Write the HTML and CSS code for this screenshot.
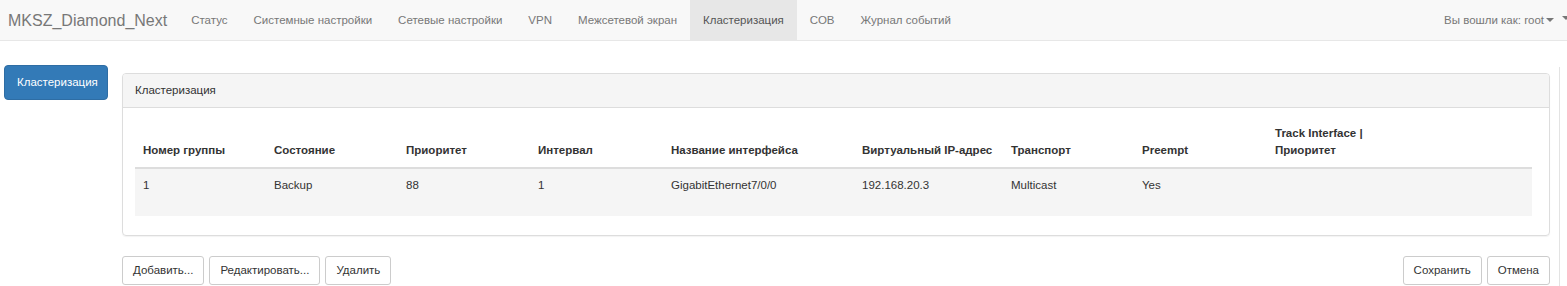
FILE: index.html
```html
<!DOCTYPE html>
<html lang="ru">
<head>
    <meta charset="UTF-8">
    <title>Кластеризация</title>
    <link rel="stylesheet" href="styles.css">
</head>
<body>
    <!-- Верхнее меню -->
    <nav class="navbar">
        <a class="brand" href="#">MKSZ_Diamond_Next</a>
        <ul class="nav">
            <li><a href="#">Статус</a></li>
            <li><a href="#">Системные настройки</a></li>
            <li><a href="#">Сетевые настройки</a></li>
            <li><a href="#">VPN</a></li>
            <li><a href="#">Межсетевой экран</a></li>
            <li class="active"><a href="#">Кластеризация</a></li>
            <li><a href="#">СОВ</a></li>
            <li><a href="#">Журнал событий</a></li>
        </ul>
        <div class="nav-right">
            <span>Вы вошли как: root</span><span class="caret"></span>
            <span class="caret extra"></span>
        </div>
    </nav>

    <div class="main">
        <!-- Боковое меню -->
        <div class="sidebar">
            <a class="btn btn-primary" href="#">Кластеризация</a>
        </div>

        <!-- Содержимое -->
        <div class="content">
            <div class="panel">
                <div class="panel-heading">Кластеризация</div>
                <div class="panel-body">
                    <table class="table">
                        <thead>
                            <tr>
                                <th class="c1">Номер группы</th>
                                <th class="c2">Состояние</th>
                                <th class="c3">Приоритет</th>
                                <th class="c4">Интервал</th>
                                <th class="c5">Название интерфейса</th>
                                <th class="c6">Виртуальный IP-адрес</th>
                                <th class="c7">Транспорт</th>
                                <th class="c8">Preempt</th>
                                <th class="c9">Track Interface |<br>Приоритет</th>
                            </tr>
                        </thead>
                        <tbody>
                            <tr>
                                <td>1</td>
                                <td>Backup</td>
                                <td>88</td>
                                <td>1</td>
                                <td>GigabitEthernet7/0/0</td>
                                <td>192.168.20.3</td>
                                <td>Multicast</td>
                                <td>Yes</td>
                                <td></td>
                            </tr>
                        </tbody>
                    </table>
                </div>
            </div>

            <div class="actions">
                <div class="btn-group">
                    <button class="btn">Добавить...</button>
                    <button class="btn">Редактировать...</button>
                    <button class="btn">Удалить</button>
                </div>
                <div class="btn-group">
                    <button class="btn">Сохранить</button>
                    <button class="btn">Отмена</button>
                </div>
            </div>
        </div>

        <div class="rail"></div>
    </div>
</body>
</html>
```

FILE: styles.css
```css
/* Основа */
body {
    margin: 0;
    font-family: "Liberation Sans", Arial, sans-serif;
    font-size: 11.5px;
    line-height: 17px;
    color: #333;
    background: #fff;
}
a {
    text-decoration: none;
}

/* Верхнее меню */
.navbar {
    display: flex;
    align-items: stretch;
    height: 40px;
    background-color: #f8f8f8;
    border-bottom: 1px solid #e7e7e7;
}
.brand {
    display: flex;
    align-items: center;
    padding: 0 10px 0 8px;
    font-size: 16px;
    color: #777;
}
.nav {
    display: flex;
    margin: 0 0 0 1px;
    padding: 0;
    list-style: none;
}
.nav li a {
    display: flex;
    align-items: center;
    height: 40px;
    padding: 0 13px;
    color: #777;
}
.nav li.active a {
    background-color: #e7e7e7;
    color: #555;
}
.nav-right {
    display: flex;
    align-items: center;
    margin-left: auto;
    color: #777;
}
.caret {
    display: inline-block;
    width: 0;
    height: 0;
    margin-left: 2px;
    border-top: 4px solid #777;
    border-left: 4px solid transparent;
    border-right: 4px solid transparent;
}
.caret.extra {
    margin-left: 8px;
    margin-right: -3px;
    align-self: flex-start;
    margin-top: 16px;
}

/* Раскладка */
.main {
    display: flex;
    align-items: flex-start;
}
.sidebar {
    width: 122px;
    padding: 24px 0 0 4px;
    box-sizing: border-box;
}
.content {
    flex: 1;
    padding-top: 32px;
}
.rail {
    width: 7px;
    margin-left: 9px;
    margin-top: 26px;
    height: 220px;
    border-left: 1px solid #e3e3e3;
}

/* Кнопки */
.btn {
    display: inline-block;
    padding: 5px 10px;
    font-family: inherit;
    font-size: 11.5px;
    line-height: 17px;
    color: #333;
    background-color: #fff;
    border: 1px solid #ccc;
    border-radius: 3px;
    cursor: pointer;
}
.btn-primary {
    padding: 8px 12px;
    color: #fff;
    background-color: #337ab7;
    border-color: #2e6da4;
    border-radius: 4px;
    width: 104px;
    box-sizing: border-box;
    text-align: center;
}

/* Панель */
.panel {
    border: 1px solid #ddd;
    border-radius: 4px;
    box-shadow: 0 1px 1px rgba(0, 0, 0, 0.05);
}
.panel-heading {
    padding: 8px 12px;
    background-color: #f5f5f5;
    border-bottom: 1px solid #ddd;
    border-radius: 3px 3px 0 0;
}
.panel-body {
    padding: 9px 17px 19px 12px;
}

/* Таблица */
.table {
    width: 100%;
    border-collapse: collapse;
    border-spacing: 0;
}
.table th {
    padding: 8px;
    text-align: left;
    vertical-align: bottom;
    font-weight: bold;
    border-bottom: 2px solid #ddd;
}
.table td {
    padding: 8px 8px 22px;
    vertical-align: top;
    background-color: #f5f5f5;
}
.c1, .c7 { width: 115px; }
.c2, .c3 { width: 116px; }
.c4, .c8 { width: 117px; }
.c5 { width: 175px; }
.c6 { width: 133px; }

/* Кнопки действий */
.actions {
    display: flex;
    justify-content: space-between;
    margin-top: 20px;
}
.btn-group {
    display: flex;
    gap: 5px;
}
```
